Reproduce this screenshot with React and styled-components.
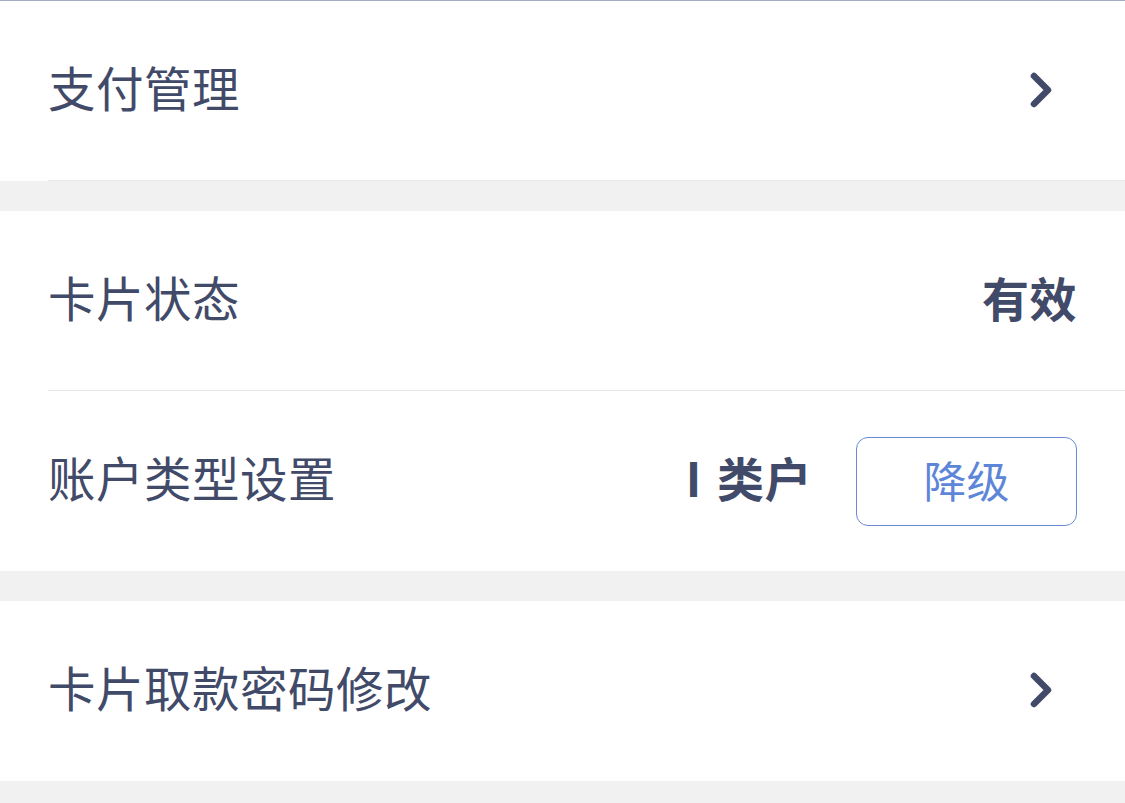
import React from 'react'
import styled, { createGlobalStyle } from 'styled-components'

const GlobalStyle = createGlobalStyle`
  html, body {
    margin: 0;
    padding: 0;
    background: #f1f1f1;
    font-family: "Noto Sans CJK SC", "Noto Sans", sans-serif;
  }
`

const Page = styled.div`
  width: 1125px;
  height: 803px;
  background: #f1f1f1;
  border-top: 1px solid #a3adc2;
  box-sizing: border-box;
  overflow: hidden;
`

const Group = styled.div`
  background: #fff;
  margin-bottom: 30px;
`

const Row = styled.div`
  position: relative;
  height: 180px;
  box-sizing: border-box;
  display: flex;
  align-items: center;
  justify-content: space-between;
  padding: 0 48px;
  ${p => p.$divider && `
    &::after {
      content: '';
      position: absolute;
      left: 48px;
      right: 0;
      bottom: 0;
      height: 1px;
      background: #e6e6e6;
    }
  `}
`

const Label = styled.span`
  font-size: 47.5px;
  color: #414a68;
  letter-spacing: 0.5px;
  margin-bottom: 10px;
`

const Right = styled.div`
  display: flex;
  align-items: center;
  gap: 44px;
`

const Value = styled.span`
  font-size: 47px;
  font-weight: 700;
  color: #414a68;
  word-spacing: 4px;
  letter-spacing: 0.5px;
  margin-bottom: 10px;
`

const Button = styled.button`
  width: 221px;
  height: 89px;
  border: 1px solid #6a8ad4;
  border-radius: 12px;
  background: #fff;
  color: #5d86d8;
  font-family: inherit;
  font-size: 43px;
  line-height: 1;
  padding: 0 0 4px;
`

const Chevron = () => (
  <svg width="24" height="40" viewBox="0 0 24 40" style={{ marginRight: 24 }}>
    <path d="M5 5 L19 19 L5 33" fill="none" stroke="#414a68" strokeWidth="6.5" strokeLinecap="round" strokeLinejoin="round" />
  </svg>
)

const App = () => (
  <Page>
    <GlobalStyle />
    <Group>
      <Row $divider>
        <Label>支付管理</Label>
        <Chevron />
      </Row>
    </Group>
    <Group>
      <Row $divider>
        <Label>卡片状态</Label>
        <Value>有效</Value>
      </Row>
      <Row>
        <Label>账户类型设置</Label>
        <Right>
          <Value>I 类户</Value>
          <Button>降级</Button>
        </Right>
      </Row>
    </Group>
    <Group>
      <Row>
        <Label>卡片取款密码修改</Label>
        <Chevron />
      </Row>
    </Group>
  </Page>
)

export default App
